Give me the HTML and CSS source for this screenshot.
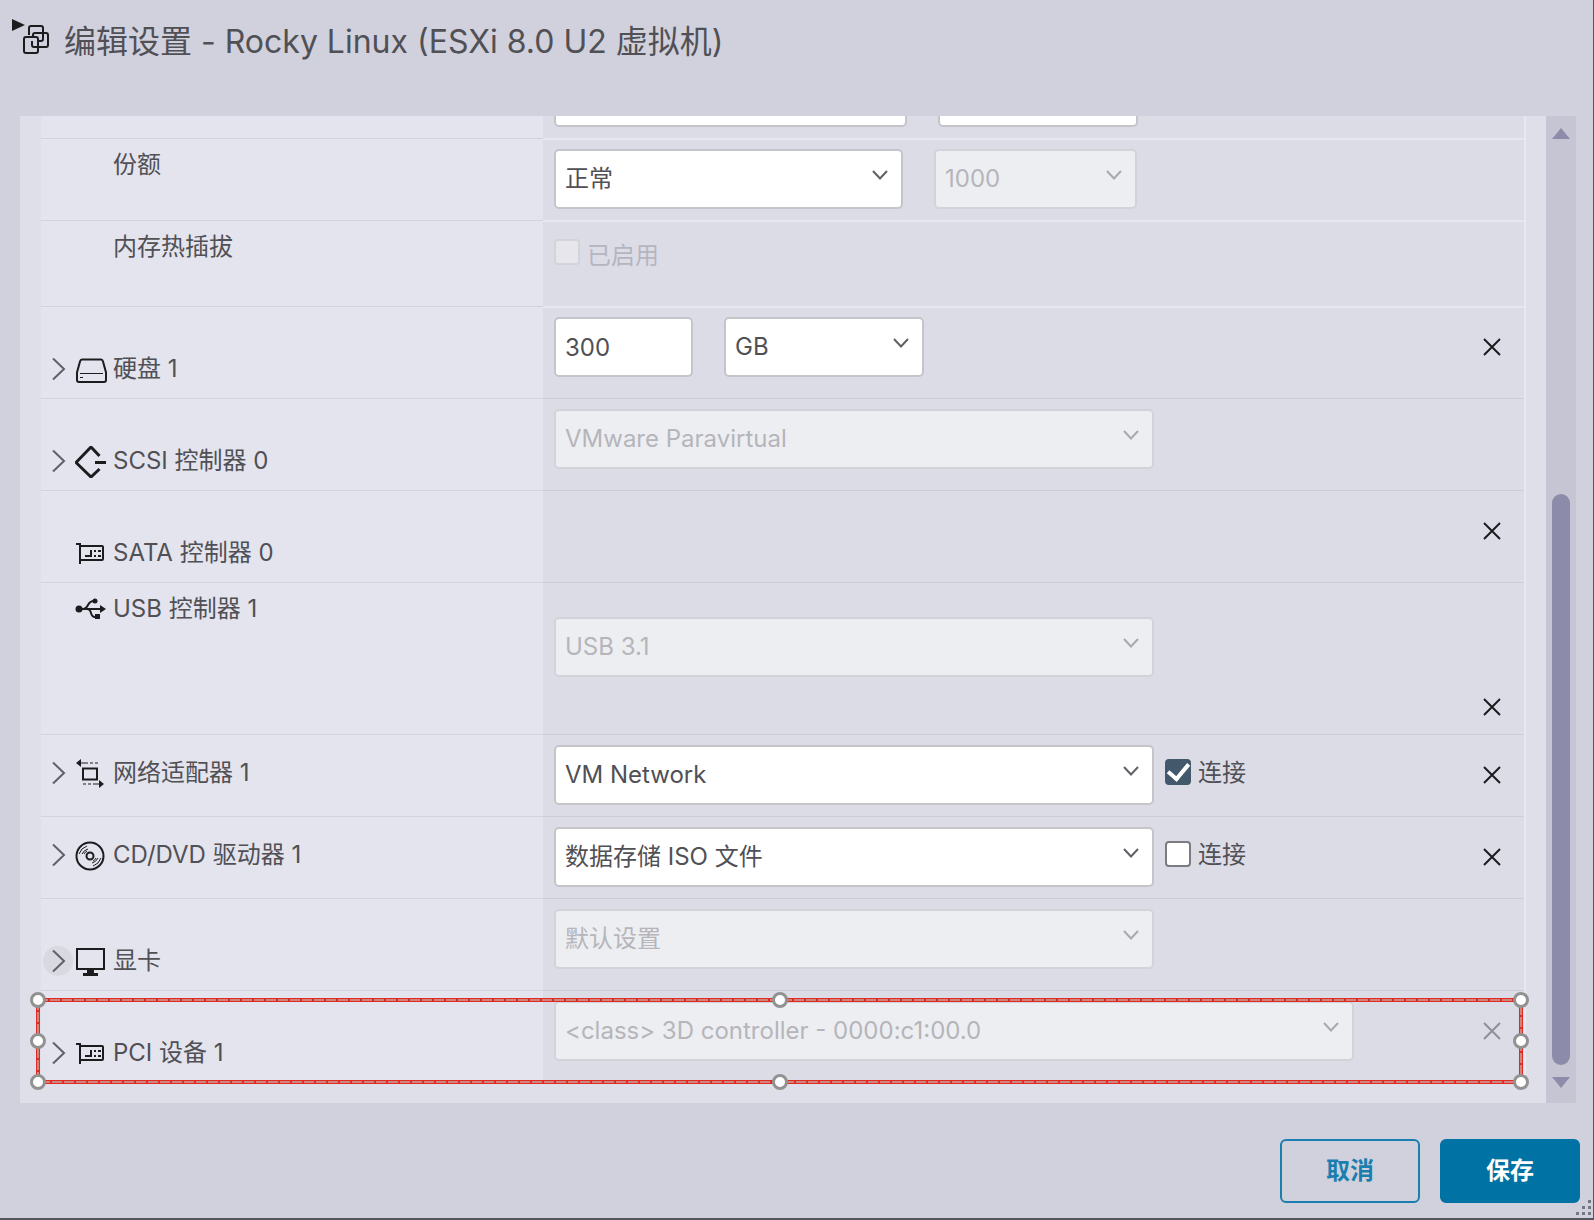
FILE: index.html
```html
<!DOCTYPE html>
<html lang="zh-CN">
<head>
    <meta charset="UTF-8">
    <meta name="viewport" content="width=device-width, initial-scale=1.0">
    <title>编辑设置 - Rocky Linux</title>
    <link rel="stylesheet" href="styles.css">
</head>
<body>
    <!-- Shared icons -->
    <svg class="icon-defs" aria-hidden="true">
        <symbol id="icon-right" viewBox="0 0 30 30"><path d="M10 4.500L21 15L10 25.500"/></symbol>
        <symbol id="icon-down" viewBox="0 0 16 10"><path d="M1 1L8 8.500L15 1"/></symbol>
        <symbol id="icon-close" viewBox="0 0 18 18"><path d="M1 1L17 17M17 1L1 17"/></symbol>
        <symbol id="icon-card" viewBox="0 0 32 32">
            <path d="M1 6h4v20M5 8h22q1 0 1 1v12q0 1-1 1H5"/>
            <path d="M10 18h6v-6M19 13h2M23 13h3M19 18h2M23 18h3"/>
        </symbol>
    </svg>

    <form class="dialog">
        <!-- Header -->
        <header class="header">
            <svg class="vm-icon" viewBox="0 0 40 38" aria-hidden="true">
                <path class="solid" d="M0 1L13 7L0 13z"/>
                <path d="M17 17V10q0-2 2-2h10q2 0 2 2v5M14 19h10q2 0 2 2v12q0 2-2 2H14q-2 0-2-2V21q0-2 2-2zM21 19v-2q0-2 2-2h11q2 0 2 2v10q0 2-2 2h-8M31 15v6q0 2-2 2h-3M20 23v4q0 2 2 2h4"/>
            </svg>
            <h1>编辑设置 - Rocky Linux (ESXi 8.0 U2 虚拟机)</h1>
        </header>

        <!-- Scrolled hardware list -->
        <main class="panel">
            <div class="viewport">
                <div class="rows">
                    <div class="row short">
                        <div class="name"></div>
                        <div class="value">
                            <div class="select limit"><select aria-label="限制"><option></option></select></div>
                            <div class="select limit-unit"><select aria-label="单位"><option></option></select></div>
                        </div>
                    </div>

                    <div class="row short">
                        <div class="name name-top"><label for="shares">份额</label></div>
                        <div class="value">
                            <div class="select shares">
                                <select id="shares"><option>正常</option></select>
                                <svg class="arrow"><use href="#icon-down"/></svg>
                            </div>
                            <div class="select shares-value">
                                <select aria-label="份额值" disabled><option>1000</option></select>
                                <svg class="arrow"><use href="#icon-down"/></svg>
                            </div>
                        </div>
                    </div>

                    <div class="row plug">
                        <div class="name name-top">内存热插拔</div>
                        <div class="value">
                            <label class="check check-off"><input type="checkbox" disabled><span>已启用</span></label>
                        </div>
                    </div>

                    <div class="row">
                        <div class="name">
                            <button type="button" class="expand" aria-label="展开"><svg><use href="#icon-right"/></svg></button>
                            <svg class="icon" viewBox="0 0 32 32"><path d="M7 5.500h19q1.500 0 2 2l3 11v7.500q0 2-2 2H4q-2 0-2-2v-7.500l3-11q.5-2 2-2z"/><path class="thin" d="M5 19.500h23M5 23.500h3"/></svg>
                            <label for="disk">硬盘 1</label>
                        </div>
                        <div class="value">
                            <input class="text" type="text" id="disk" value="300">
                            <div class="select unit">
                                <select aria-label="容量单位"><option>GB</option></select>
                                <svg class="arrow"><use href="#icon-down"/></svg>
                            </div>
                        </div>
                        <button type="button" class="remove" aria-label="移除"><svg><use href="#icon-close"/></svg></button>
                    </div>

                    <div class="row">
                        <div class="name">
                            <button type="button" class="expand" aria-label="展开"><svg><use href="#icon-right"/></svg></button>
                            <svg class="icon" viewBox="0 0 32 32"><path class="bold" d="M24.500 10L16 1L1 16.500L16 31L24.500 23M20 16.500h11"/></svg>
                            <label for="scsi">SCSI 控制器 0</label>
                        </div>
                        <div class="value">
                            <div class="select">
                                <select id="scsi" disabled><option>VMware Paravirtual</option></select>
                                <svg class="arrow"><use href="#icon-down"/></svg>
                            </div>
                        </div>
                    </div>

                    <div class="row">
                        <div class="name">
                            <span class="expand"></span>
                            <svg class="icon"><use href="#icon-card"/></svg>
                            SATA 控制器 0
                        </div>
                        <div class="value"></div>
                        <button type="button" class="remove" aria-label="移除"><svg><use href="#icon-close"/></svg></button>
                    </div>

                    <div class="row usb">
                        <div class="name name-top">
                            <span class="expand"></span>
                            <svg class="icon" viewBox="0 0 32 32">
                                <path d="M3 15h24M8 15q3 0 5-4t6-4h1M12 15q3 0 4 4t4 4h1"/>
                                <circle class="solid" cx="4" cy="15" r="3.500"/><circle class="solid" cx="20" cy="7" r="2.500"/>
                                <path class="solid" d="M25 11l6 4l-6 4zM20 20h5v5h-5z"/>
                            </svg>
                            <label for="usb">USB 控制器 1</label>
                        </div>
                        <div class="value">
                            <div class="select">
                                <select id="usb" disabled><option>USB 3.1</option></select>
                                <svg class="arrow"><use href="#icon-down"/></svg>
                            </div>
                        </div>
                        <button type="button" class="remove" aria-label="移除"><svg><use href="#icon-close"/></svg></button>
                    </div>

                    <div class="row short">
                        <div class="name name-middle">
                            <button type="button" class="expand" aria-label="展开"><svg><use href="#icon-right"/></svg></button>
                            <svg class="icon" viewBox="0 0 32 32"><path d="M8 10.500h14v11H8z"/><path class="solid" d="M1 5l5-4v8zM29 26l-5-4v8z"/><path class="thin" d="M6 5h7M15 5h3M20 5h3M24 26h-6M16 26h-3M11 26H8"/></svg>
                            <label for="net">网络适配器 1</label>
                        </div>
                        <div class="value">
                            <div class="select">
                                <select id="net"><option>VM Network</option></select>
                                <svg class="arrow"><use href="#icon-down"/></svg>
                            </div>
                            <label class="check"><input type="checkbox" checked><span>连接</span></label>
                        </div>
                        <button type="button" class="remove" aria-label="移除"><svg><use href="#icon-close"/></svg></button>
                    </div>

                    <div class="row short">
                        <div class="name name-middle">
                            <button type="button" class="expand" aria-label="展开"><svg><use href="#icon-right"/></svg></button>
                            <svg class="icon" viewBox="0 0 32 32"><circle cx="15" cy="16" r="13.500"/><circle cx="15" cy="16" r="3.500"/><path class="thin" d="M4 14q2-6 8-8M7 14q2-4 6-5M9 14q1-2 3-3M26 18q-2 6-8 8M23 18q-2 4-6 5M21 18q-1 2-3 3"/></svg>
                            <label for="cd">CD/DVD 驱动器 1</label>
                        </div>
                        <div class="value">
                            <div class="select">
                                <select id="cd"><option>数据存储 ISO 文件</option></select>
                                <svg class="arrow"><use href="#icon-down"/></svg>
                            </div>
                            <label class="check"><input type="checkbox"><span>连接</span></label>
                        </div>
                        <button type="button" class="remove" aria-label="移除"><svg><use href="#icon-close"/></svg></button>
                    </div>

                    <div class="row">
                        <div class="name">
                            <button type="button" class="expand expand-hover" aria-label="展开"><svg><use href="#icon-right"/></svg></button>
                            <svg class="icon" viewBox="0 0 32 32"><path d="M2 3h27v20H2z"/><path class="solid" d="M12 24h7v3h4v3H8v-3h4z"/></svg>
                            <label for="gpu">显卡</label>
                        </div>
                        <div class="value">
                            <div class="select">
                                <select id="gpu" disabled><option>默认设置</option></select>
                                <svg class="arrow"><use href="#icon-down"/></svg>
                            </div>
                        </div>
                    </div>

                    <div class="row">
                        <div class="name">
                            <button type="button" class="expand" aria-label="展开"><svg><use href="#icon-right"/></svg></button>
                            <svg class="icon"><use href="#icon-card"/></svg>
                            <label for="pci">PCI 设备 1</label>
                        </div>
                        <div class="value">
                            <div class="select wide">
                                <select id="pci" disabled><option>&lt;class&gt; 3D controller - 0000:c1:00.0</option></select>
                                <svg class="arrow"><use href="#icon-down"/></svg>
                            </div>
                        </div>
                        <button type="button" class="remove" aria-label="移除" disabled><svg><use href="#icon-close"/></svg></button>

                        <!-- Red marker around the PCI device -->
                        <div class="marker">
                            <svg><rect class="edge"/><rect class="dash"/></svg>
                            <i class="top left"></i><i class="top center"></i><i class="top right"></i>
                            <i class="middle left"></i><i class="middle right"></i>
                            <i class="bottom left"></i><i class="bottom center"></i><i class="bottom right"></i>
                        </div>
                    </div>
                </div>
            </div>

            <div class="scrollbar">
                <span class="scroll-up"></span>
                <span class="scroll-space"></span>
                <span class="scroll-thumb"></span>
                <span class="scroll-down"></span>
            </div>
        </main>

        <!-- Buttons -->
        <footer class="footer">
            <button type="button" class="btn">取消</button>
            <button type="submit" class="btn btn-save">保存</button>
            <svg class="grip" viewBox="0 0 16 16"><path d="M12 0h3v3h-3zM6 6h3v3H6zM12 6h3v3h-3zM0 12h3v3H0zM6 12h3v3H6zM12 12h3v3h-3z"/></svg>
        </footer>
    </form>
</body>
</html>
```

FILE: styles.css
```css
* {
    box-sizing: border-box;
}

body {
    margin: 0;
    background-color: #d0d1dd;
    color: #505055;
    font-family: Inter, "Noto Sans CJK SC", sans-serif;
    font-size: 24px;
    font-weight: 400;
    line-height: 30px;
}

button, input, select {
    margin: 0;
    font: inherit;
    color: inherit;
}

svg {
    display: block;
    flex: none;
    fill: none;
    stroke: #1c1c1f;
    stroke-width: 2;
}

.icon-defs {
    position: absolute;
    width: 0;
    height: 0;
}

.solid {
    fill: #1c1c1f;
    stroke: none;
}

.thin {
    stroke-width: 1;
}

.bold {
    stroke-width: 3;
}

.dialog {
    display: flex;
    flex-direction: column;
    height: 100vh;
    border: solid #55555c;
    border-width: 0 1px 2px 0;
}

/* Header styling */
.header {
    display: flex;
    gap: 12px;
    height: 116px;
    padding: 18px 12px;
}

.vm-icon {
    width: 40px;
    height: 38px;
}

h1 {
    margin: 0;
    font-size: 32px;
    font-weight: 400;
    line-height: 48px;
}

/* Hardware list, scrolled to its end */
.panel {
    display: flex;
    flex: 1;
    min-height: 0;
    margin: 0 17px 0 20px;
}

.viewport {
    display: flex;
    flex: 1;
    flex-direction: column;
    justify-content: flex-end;
    padding: 0 20px 21px 21px;
    overflow: hidden;
    background-color: #dfdfe9;
}

.rows {
    border-right: 2px solid #e8e8f2;
    background-color: #dcdce7;
}

.row {
    display: flex;
    position: relative;
    min-height: 92px;
}

.short {
    min-height: 82px;
}

.plug {
    min-height: 86px;
}

.usb {
    min-height: 152px;
}

.name {
    display: flex;
    flex: none;
    width: 502px;
    padding: 47px 0 0 2px;
    border-top: 1px solid #d3d3df;
    background-color: #e4e4ee;
}

.name-top {
    padding-top: 11px;
}

.name-middle {
    padding-top: 23px;
}

.short .name-top,
.plug .name-top {
    padding-left: 72px;
}

.value {
    display: flex;
    flex: 1;
    gap: 31px;
    padding: 10px 0 0 11px;
    border-top: 1px solid #cdcdd9;
}

.row:nth-child(-n+4) > .value,
.row:nth-child(-n+4)::after {
    border-top: 2px solid #e6e6f0;
}

.row::after {
    content: "";
    position: absolute;
    top: 0;
    right: 0;
    width: 64px;
    border-top: 1px solid #cdcdd9;
}

.row:nth-child(-n+4) > .value {
    padding-top: 9px;
}

.usb .value {
    padding-top: 34px;
}

.expand {
    width: 30px;
    height: 30px;
    padding: 0;
    border: 0;
    border-radius: 50%;
    background: none;
}

.expand svg {
    width: 30px;
    height: 30px;
    stroke: #606066;
}

.expand-hover {
    background-color: #d9d9e1;
}

.icon {
    width: 32px;
    height: 32px;
    margin: 0 6px 0 2px;
}

/* Controls */
.select {
    position: relative;
    width: 600px;
    height: 60px;
}

.shares {
    width: 349px;
}

.shares-value {
    width: 203px;
}

.limit {
    width: 353px;
}

.limit-unit,
.unit {
    width: 200px;
}

.wide {
    width: 800px;
}

select,
.text {
    width: 100%;
    height: 60px;
    padding: 0 9px;
    appearance: none;
    border: 2px solid #c4c4c9;
    border-radius: 5px;
    background-color: #fff;
}

.text {
    width: 139px;
}

select:disabled {
    border-color: #d2d2d8;
    background-color: #edeef2;
    color: #b5b5ba;
    opacity: 1;
}

.arrow {
    position: absolute;
    top: 21px;
    right: 15px;
    width: 16px;
    height: 10px;
    stroke: #606066;
    pointer-events: none;
}

select:disabled + .arrow {
    stroke: #a8a8ad;
}

.check {
    display: flex;
    gap: 7px;
    height: 30px;
    margin: 13px 0 0 -20px;
}

.check input {
    display: flex;
    width: 26px;
    height: 26px;
    margin-top: 1px;
    appearance: none;
    border: 2px solid #7b7b80;
    border-radius: 4px;
    background-color: #fff;
}

.check input:checked {
    border-color: #43586a;
    background-color: #43586a;
}

.check input:checked::before {
    content: "";
    width: 9px;
    height: 17px;
    margin: 0 auto;
    border: solid #fff;
    border-width: 0 4px 4px 0;
    transform: translateY(-2px) rotate(40deg);
}

.check-off {
    align-items: flex-end;
    margin: 10px 0 0;
    color: #b5b5bf;
}

.check-off input {
    margin: 0 0 6px;
    border-color: #d3d3da;
    background-color: #e6e6ec;
}

.remove {
    align-self: flex-start;
    width: 64px;
    padding: 32px 23px 0;
    border: 0;
    background: none;
}

.remove svg {
    width: 18px;
    height: 18px;
}

.remove:disabled svg {
    stroke: #8f8f98;
}

.usb .remove {
    padding-top: 116px;
}

/* Marker */
.marker {
    position: absolute;
    inset: 8px 1px -2px -5px;
    pointer-events: none;
}

.marker svg {
    width: 100%;
    height: 100%;
}

.marker rect {
    x: 2px;
    y: 2px;
    width: calc(100% - 4px);
    height: calc(100% - 4px);
}

.edge {
    stroke: #df2b22;
    stroke-width: 4;
}

.dash {
    stroke: #cf857f;
    stroke-width: 2;
    stroke-dasharray: 10 2;
}

.marker i {
    position: absolute;
    width: 16px;
    height: 16px;
    border: 3px solid #929292;
    border-radius: 50%;
    background-color: #fff;
}

.marker .top {
    top: -6px;
}

.marker .middle {
    top: calc(50% - 8px);
}

.marker .bottom {
    bottom: -6px;
}

.marker .left {
    left: -6px;
}

.marker .center {
    left: calc(50% - 8px);
}

.marker .right {
    right: -6px;
}

/* Scrollbar */
.scrollbar {
    display: flex;
    flex-direction: column;
    align-items: center;
    width: 30px;
    padding: 12px 0 15px;
    background-color: #c5c5d3;
}

.scroll-up,
.scroll-down {
    border: 9px solid transparent;
    border-top-width: 0;
    border-bottom: 11px solid #8c8ba9;
}

.scroll-down {
    margin-top: 12px;
    border-top: 11px solid #8c8ba9;
    border-bottom-width: 0;
}

.scroll-space {
    flex: 355;
}

.scroll-thumb {
    flex: 571;
    width: 18px;
    border-radius: 9px;
    background-color: #8c8ba9;
}

/* Footer */
.footer {
    display: flex;
    position: relative;
    justify-content: flex-end;
    gap: 20px;
    padding: 36px 13px 15px;
}

.btn {
    width: 140px;
    height: 64px;
    border: 2px solid #1a7fae;
    border-radius: 6px;
    background: none;
    color: #1a7fae;
    font-weight: 700;
}

.btn-save {
    border-color: #0072a3;
    background-color: #0072a3;
    color: #fff;
}

.grip {
    position: absolute;
    right: 1px;
    bottom: 2px;
    width: 16px;
    height: 16px;
    fill: #77777f;
    stroke: none;
}
```
